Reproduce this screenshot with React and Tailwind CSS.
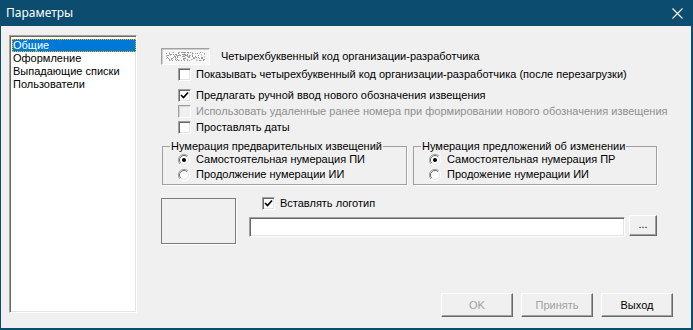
import React from "react";

const font = { fontFamily: '"Liberation Sans", Arial, sans-serif' };

const Check = ({ checked, disabled }) => (
  <span
    className={`flex w-[13px] h-[13px] shrink-0 items-center justify-center border border-t-[#a0a0a0] border-l-[#a0a0a0] border-b-[#ffffff] border-r-[#ffffff] ${
      disabled ? "bg-[#f0f0f0] shadow-[inset_1px_1px_0_#d4d4d4]" : "bg-white shadow-[inset_1px_1px_0_#696969,inset_-1px_-1px_0_#e3e3e3]"
    }`}
  >
    {checked && (
      <svg width="9" height="9" viewBox="0 0 9 9">
        <path d="M1 4 L3.5 6.5 L8 1.5" fill="none" stroke="#000" strokeWidth="1.7" />
      </svg>
    )}
  </span>
);

const CheckRow = ({ label, checked, disabled, className = "" }) => (
  <div className={`flex items-center h-[13px] ${className}`}>
    <Check checked={checked} disabled={disabled} />
    <span className={`ml-[5px] whitespace-nowrap ${disabled ? "text-[#8f8f8f]" : "text-black"}`}>{label}</span>
  </div>
);

const Radio = ({ checked }) => (
  <svg width="12" height="12" viewBox="0 0 12 12" className="shrink-0">
    <circle cx="6" cy="6" r="5.5" fill="#fff" />
    <path d="M10 2 A5.5 5.5 0 0 0 2 10" fill="none" stroke="#a0a0a0" strokeWidth="1" />
    <path d="M9.2 2.8 A4.5 4.5 0 0 0 2.8 9.2" fill="none" stroke="#696969" strokeWidth="1" />
    <path d="M2 10 A5.5 5.5 0 0 0 10 2" fill="none" stroke="#ffffff" strokeWidth="1" />
    <path d="M2.8 9.2 A4.5 4.5 0 0 0 9.2 2.8" fill="none" stroke="#e3e3e3" strokeWidth="1" />
    {checked && <circle cx="6" cy="6" r="2" fill="#000" />}
  </svg>
);

const RadioRow = ({ label, checked }) => (
  <div className="flex items-center h-[15px] pl-[15px]">
    <Radio checked={checked} />
    <span className="ml-[6px] whitespace-nowrap">{label}</span>
  </div>
);

const Group = ({ title, children, className = "" }) => (
  <fieldset className={`border border-[#a0a0a0] shadow-[1px_1px_0_#ffffff] h-[45px] shrink-0 ${className}`}>
    <legend className="ml-[7px] px-[1px] leading-[13px]">{title}</legend>
    <div className="flex flex-col -mt-[1px]">{children}</div>
  </fieldset>
);

const Button = ({ children, disabled }) => (
  <button
    className={`w-[72px] h-[24px] bg-[#f0f0f0] border border-t-white border-l-white border-b-[#696969] border-r-[#696969] shadow-[inset_-1px_-1px_0_#a0a0a0] ${
      disabled ? "text-[#a0a0a0]" : "text-black"
    }`}
  >
    {children}
  </button>
);

// noisy dots in the developer-code box
const dots = [];
let seed = 7;
for (let i = 0; i < 170; i++) {
  seed = (seed * 9301 + 49297) % 233280;
  const x = Math.floor((seed / 233280) * 40);
  seed = (seed * 9301 + 49297) % 233280;
  const y = Math.floor((seed / 233280) * 9);
  dots.push([x, y]);
}

export default function App() {
  const items = ["Общие", "Оформление", "Выпадающие списки", "Пользователи"];
  return (
    <div className="w-[693px] h-[330px] bg-[#0b4c6f] flex flex-col text-[11px] text-black" style={font}>
      <div className="h-[26px] flex items-center justify-between pl-[6px] pr-[10px] text-white">
        <span className="text-[12px]" style={{ fontFamily: '"Noto Sans", "Open Sans", sans-serif' }}>
          Параметры
        </span>
        <svg width="11" height="11" viewBox="0 0 11 11">
          <path d="M0.5 0.5 L10.5 10.5 M10.5 0.5 L0.5 10.5" stroke="#fff" strokeWidth="1.1" />
        </svg>
      </div>

      <div className="flex-1 ml-[1px] mr-[2px] mb-[2px] bg-[#f0f0f0] flex">
        {/* список разделов */}
        <div className="ml-[8px] mt-[9px] w-[128px] h-[278px] shrink-0 bg-white border border-t-[#a0a0a0] border-l-[#a0a0a0] border-b-white border-r-white shadow-[inset_1px_1px_0_#696969,inset_-1px_-1px_0_#e3e3e3] pt-[3px] pl-[2px] pr-[0px]">
          {items.map((it, i) => (
            <div
              key={it}
              className={`h-[13px] leading-[13px] pl-[1px] ${
                i === 0 ? "bg-[#0078d7] text-white outline outline-1 outline-dotted outline-[#f0c000] -outline-offset-1" : ""
              }`}
            >
              {it}
            </div>
          ))}
        </div>

        {/* правая часть */}
        <div className="flex-1 flex flex-col pl-[24px] pt-[22px] pr-[18px] pb-[11px]">
          <div className="flex items-center h-[17px]">
            <div className="w-[49px] h-[17px] bg-[#f7f7f7] border border-t-[#a0a0a0] border-l-[#a0a0a0] border-b-white border-r-white shadow-[inset_1px_1px_0_#cfcfcf] flex items-center justify-center">
              <svg width="40" height="9" viewBox="0 0 40 9">
                {dots.map(([x, y], i) => (
                  <rect key={i} x={x} y={y} width="1" height="1" fill={i % 3 ? "#9a9a9a" : "#c8c8c8"} />
                ))}
              </svg>
            </div>
            <span className="ml-[11px] whitespace-nowrap">Четырехбуквенный код организации-разработчика</span>
          </div>

          <div className="pl-[17px] flex flex-col">
            <CheckRow className="mt-[3px]" label="Показывать четырехбуквенный код организации-разработчика (после перезагрузки)" />
            <CheckRow className="mt-[8px]" checked label="Предлагать ручной ввод нового обозначения извещения" />
            <CheckRow
              className="mt-[3px]"
              disabled
              label="Использовать удаленные ранее номера при формировании нового обозначения извещения"
            />
            <CheckRow className="mt-[3px]" label="Проставлять даты" />
          </div>

          <div className="flex mt-[6px] gap-[6px]">
            <Group title="Нумерация предварительных извещений" className="w-[245px] ml-[1px]">
              <RadioRow checked label="Самостоятельная нумерация ПИ" />
              <RadioRow label="Продолжение нумерации ИИ" />
            </Group>
            <Group title="Нумерация предложений об изменении" className="w-[244px]">
              <RadioRow checked label="Самостоятельная нумерация ПР" />
              <RadioRow label="Продожение нумерации ИИ" />
            </Group>
          </div>

          <div className="flex mt-[13px]">
            <div className="w-[75px] h-[46px] border border-[#7a7a7a] shadow-[1px_1px_0_#ffffff]" />
            <div className="ml-[13px] flex flex-col">
              <CheckRow className="ml-[13px] mt-[-1px]" checked label="Вставлять логотип" />
              <div className="flex items-center mt-[7px]">
                <div className="w-[376px] h-[20px] bg-white border border-t-[#a0a0a0] border-l-[#a0a0a0] border-b-white border-r-white shadow-[inset_1px_1px_0_#696969,inset_-1px_-1px_0_#e3e3e3]" />
                <button className="ml-[4px] -mt-[3px] w-[28px] h-[21px] bg-[#f0f0f0] border border-t-white border-l-white border-b-[#696969] border-r-[#696969] shadow-[inset_-1px_-1px_0_#a0a0a0] leading-none pb-[3px]">
                  ...
                </button>
              </div>
            </div>
          </div>

          <div className="mt-auto flex justify-end gap-[8px]">
            <Button disabled>OK</Button>
            <Button disabled>Принять</Button>
            <Button>Выход</Button>
          </div>
        </div>
      </div>
    </div>
  );
}
